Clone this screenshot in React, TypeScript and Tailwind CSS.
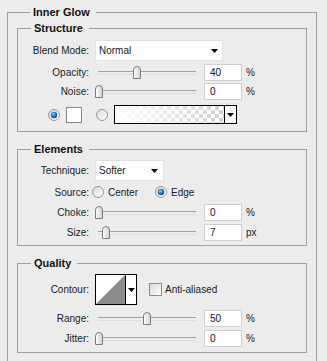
import React from "react";

const Thumb = () => (
  <svg width="8" height="13" viewBox="0 0 8 13">
    <defs>
      <linearGradient id="tg" x1="0" y1="0" x2="1" y2="0">
        <stop offset="0" stopColor="#ffffff" />
        <stop offset="1" stopColor="#cfcfcf" />
      </linearGradient>
    </defs>
    <path d="M0.5 12.5 V4 Q0.5 0.5 4 0.5 Q7.5 0.5 7.5 4 V12.5 Z" fill="url(#tg)" stroke="#7c7c7c" />
  </svg>
);

const Radio = ({ on }: { on?: boolean }) => (
  <svg width="12" height="12" viewBox="0 0 12 12" className="shrink-0">
    <defs>
      <linearGradient id="rg" x1="0" y1="0" x2="1" y2="1">
        <stop offset="0" stopColor="#d6d6d6" />
        <stop offset="1" stopColor="#ffffff" />
      </linearGradient>
      <radialGradient id="bd" cx="0.4" cy="0.35" r="0.7">
        <stop offset="0" stopColor="#8cc8f0" />
        <stop offset="0.5" stopColor="#2a7fc4" />
        <stop offset="1" stopColor="#0b3f73" />
      </radialGradient>
    </defs>
    <circle cx="6" cy="6" r="5.5" fill="url(#rg)" stroke="#9a9a9a" />
    {on && <circle cx="6" cy="6" r="3.2" fill="url(#bd)" />}
  </svg>
);

const Arrow = () => (
  <svg width="7" height="4" viewBox="0 0 7 4" className="shrink-0">
    <path d="M0 0 H7 L3.5 4 Z" fill="#000" />
  </svg>
);

const Label = ({ children }: { children: React.ReactNode }) => (
  <div className="w-[71px] shrink-0 text-right">{children}</div>
);

const SliderRow = ({ label, value, unit, pct, className }: { label: string; value: string; unit: string; pct: number; className: string }) => (
  <div className={`flex items-center h-[16px] ${className}`}>
    <Label>{label}</Label>
    <div className="relative ml-[6px] w-[104px] h-[16px] shrink-0">
      <div className="absolute left-[3px] top-[7px] w-[98px] h-[4px] border-t border-t-[#a3a3a3] border-b border-b-[#dcdcdc]" />
      <div className="absolute top-[2px]" style={{ left: `${Math.round(pct * 0.96)}px` }}>
        <Thumb />
      </div>
    </div>
    <div className="ml-[5px] w-[38px] h-[17px] shrink-0 bg-white border border-[#cfcfcf] pl-[5px] flex items-center text-[#0d1526]">
      {value}
    </div>
    <div className="ml-[4px]">{unit}</div>
  </div>
);

const Legend = ({ children }: { children: React.ReactNode }) => (
  <legend className="ml-[13px] pl-[3px] pr-[6px] text-[11px] leading-[14px] font-bold text-[#111]">{children}</legend>
);

export default function App() {
  return (
    <div
      className="w-[327px] h-[361px] overflow-hidden bg-[#ececec] pl-[7px] pt-[5px] text-[10px] text-[#161c26]"
      style={{ fontFamily: '"Liberation Sans", Arial, sans-serif' }}
    >
      <fieldset className="w-[310px] border border-[#a0a0a0] pl-[9px] pr-[9px] pt-[2px] pb-[30px]">
        <Legend>Inner Glow</Legend>

        <fieldset className="border border-[#a0a0a0] pt-[5px] pb-[7px]">
          <Legend>Structure</Legend>
          <div className="flex items-center h-[21px]">
            <Label>Blend Mode:</Label>
            <div className="ml-[6px] w-[128px] h-[21px] bg-white border border-[#e2e2e2] flex items-center justify-between pl-[3px] pr-[4px]">
              <span>Normal</span>
              <Arrow />
            </div>
          </div>
          <SliderRow label="Opacity:" value="40" unit="%" pct={40} className="mt-[3px]" />
          <SliderRow label="Noise:" value="0" unit="%" pct={0} className="mt-[3px]" />
          <div className="flex items-center h-[19px] mt-[6px] pl-[30px]">
            <Radio on />
            <div className="ml-[6px] w-[16px] h-[16px] bg-white border border-[#8a8a8a]" />
            <div className="ml-[14px]">
              <Radio />
            </div>
            <div className="ml-[6px] w-[123px] h-[19px] border border-black flex">
              <div className="flex-1 bg-[image:linear-gradient(to_right,#ffffff,rgba(255,255,255,0)),repeating-conic-gradient(#d2d2d2_0_25%,#ffffff_0_50%)] bg-[length:100%_100%,8px_8px]" />
              <div className="w-[12px] border-l border-black bg-white flex items-center justify-center">
                <Arrow />
              </div>
            </div>
          </div>
        </fieldset>

        <fieldset className="mt-[10px] border border-[#a0a0a0] pt-[4px] pb-[5px]">
          <Legend>Elements</Legend>
          <div className="flex items-center h-[21px]">
            <Label>Technique:</Label>
            <div className="ml-[6px] w-[69px] h-[21px] bg-white border border-[#e2e2e2] flex items-center justify-between pl-[3px] pr-[5px]">
              <span>Softer</span>
              <Arrow />
            </div>
          </div>
          <div className="flex items-center h-[16px] mt-[3px]">
            <Label>Source:</Label>
            <div className="ml-[3px]">
              <Radio />
            </div>
            <span className="ml-[4px] w-[47px]">Center</span>
            <Radio on />
            <span className="ml-[4px]">Edge</span>
          </div>
          <SliderRow label="Choke:" value="0" unit="%" pct={0} className="mt-[4px]" />
          <SliderRow label="Size:" value="7" unit="px" pct={7} className="mt-[4px]" />
        </fieldset>

        <fieldset className="mt-[10px] border border-[#a0a0a0] pt-[4px] pb-[6px]">
          <Legend>Quality</Legend>
          <div className="flex items-center h-[31px]">
            <Label>Contour:</Label>
            <div className="ml-[6px] w-[42px] h-[31px] border border-black flex bg-white">
              <svg width="29" height="29" viewBox="0 0 29 29" className="shrink-0">
                <path d="M0 29 L29 0 V29 Z" fill="#8c8c8c" />
              </svg>
              <div className="w-[11px] border-l border-black flex items-center justify-center">
                <Arrow />
              </div>
            </div>
            <div className="ml-[12px] w-[13px] h-[13px] border border-[#8e8e8e] bg-[linear-gradient(135deg,#d9d9d9,#ffffff)]" />
            <span className="ml-[3px]">Anti-aliased</span>
          </div>
          <SliderRow label="Range:" value="50" unit="%" pct={50} className="mt-[5px]" />
          <SliderRow label="Jitter:" value="0" unit="%" pct={0} className="mt-[4px]" />
        </fieldset>
      </fieldset>
    </div>
  );
}
